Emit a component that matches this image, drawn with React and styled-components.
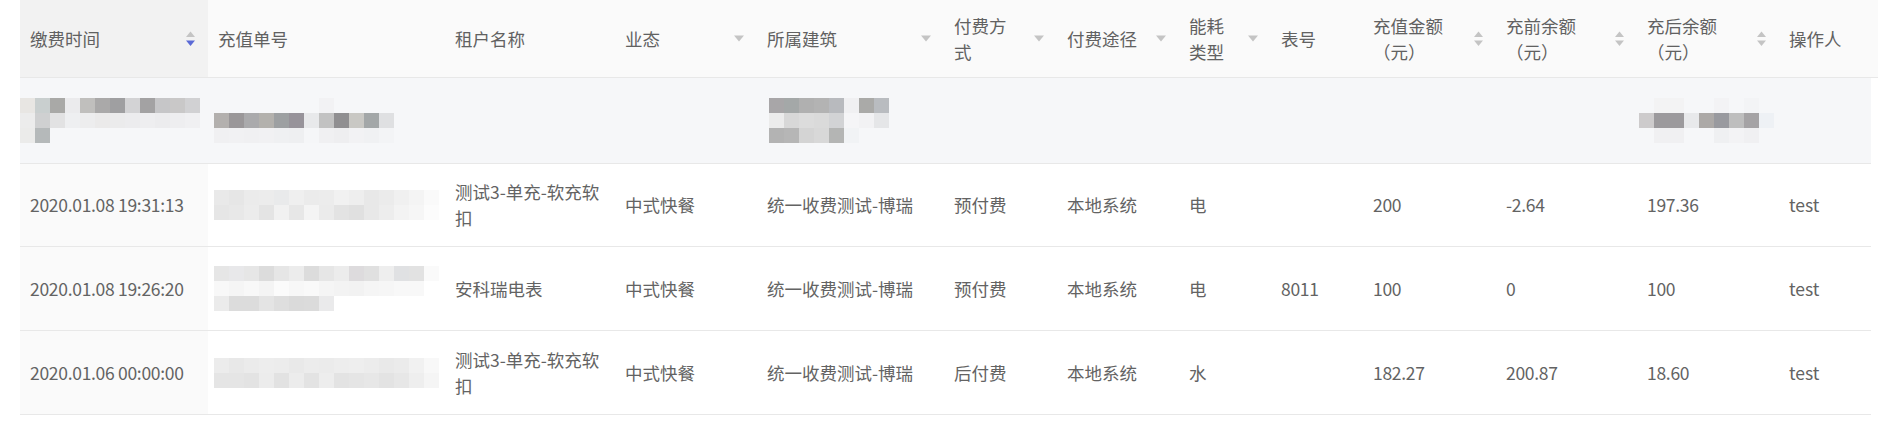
import React from 'react'
import styled, { createGlobalStyle } from 'styled-components'

const GlobalStyle = createGlobalStyle`
    body {
        margin: 0;
        background: #fff;
        font-family: "Noto Sans CJK SC", sans-serif;
    }
`;

const COLS = [188, 237, 170, 142, 187, 113, 122, 92, 92, 133, 141, 142, 92];
const template = COLS.map((w) => `${w}px`).join(' ');

const Page = styled.div`
    padding-left: 20px;
    width: 1858px;
    color: #636363;
    font-size: 17.5px;
    line-height: 26px;
`;

const HeadRow = styled.div`
    display: grid;
    grid-template-columns: ${template} 7px;
    height: 77px;
    background: #fafafa;
    border-bottom: 1px solid #e8e8e8;
    width: 1858px;
`;

const Row = styled.div`
    display: grid;
    grid-template-columns: ${template};
    height: ${(p) => p.$h}px;
    background: ${(p) => p.$bg || '#fff'};
    border-bottom: 1px solid #e8e8e8;
    width: 1851px;
`;

const HeadCell = styled.div`
    display: flex;
    align-items: center;
    padding-left: 10px;
    background: ${(p) => (p.$sorted ? '#f2f2f2' : 'transparent')};
    color: #616161;
    min-width: 0;
`;

const Title = styled.span`
    flex: 1;
    min-width: 0;
`;

const IconSlot = styled.span`
    flex: 0 0 36px;
    display: flex;
    align-items: center;
    justify-content: center;
`;

const Cell = styled.div`
    display: flex;
    align-items: center;
    padding: 0 10px;
    background: ${(p) => (p.$sorted ? '#fafafa' : 'transparent')};
    letter-spacing: ${(p) => (p.$num ? '-0.3px' : 'normal')};
    min-width: 0;
`;

const FlushCell = styled.div`
    display: flex;
    align-items: center;
    min-width: 0;
`;

const Mosaic = styled.svg`
    display: block;
    flex: none;
    margin-left: ${(p) => p.$shift || 0}px;
`;

const SortIcon = ({ active }) => (
    <svg width="9" height="16" viewBox="0 0 9 16">
        <polygon points="0,6 4.5,0.5 9,6" fill="#c4c4c4" />
        <polygon points="0,9.5 9,9.5 4.5,15" fill={active ? '#5b6ad6' : '#c4c4c4'} />
    </svg>
);

const FilterIcon = () => (
    <svg width="10" height="7" viewBox="0 0 10 7">
        <polygon points="0,0.5 10,0.5 5,6.5" fill="#c4c4c4" />
    </svg>
);

const Blocks = ({ rows, shift }) => {
    const n = Math.max(...rows.map((r) => r.length));
    return (
        <Mosaic $shift={shift} width={n * 15} height={rows.length * 15} viewBox={`0 0 ${n * 15} ${rows.length * 15}`}>
            {rows.map((r, y) =>
                r.map((c, x) =>
                    c ? <rect key={`${x}-${y}`} x={x * 15} y={y * 15} width="15" height="15" fill={c} /> : null
                )
            )}
        </Mosaic>
    );
};

const heads = [
    { t: '缴费时间', icon: 'sort', active: true, sorted: true },
    { t: '充值单号' },
    { t: '租户名称' },
    { t: '业态', icon: 'filter' },
    { t: '所属建筑', icon: 'filter' },
    { t: '付费方式', icon: 'filter' },
    { t: '付费途径', icon: 'filter' },
    { t: '能耗类型', icon: 'filter' },
    { t: '表号' },
    { t: '充值金额（元）', icon: 'sort' },
    { t: '充前余额（元）', icon: 'sort' },
    { t: '充后余额（元）', icon: 'sort' },
    { t: '操作人' },
];

const blurTime = [
    ['#e8e6e3', '#c9cfcf', '#a9a9a7', '#ebebed', '#c0bfbd', '#aaa9a9', '#9f9fa1', '#d3d3d5', '#a3a2a3', '#c6c6c8', '#c9c8c8', '#d1d1d3'],
    ['#ececec', '#cfd0d1', '#e2e2e3', '#eeeff1', '#ededee', '#ebeaea', '#ebebec', '#ececee', '#eeeef0', '#ececee', '#eeeef0', '#f0f0f2'],
    ['#ebebea', '#b5b9ba'],
];
const blurOrder = [
    [null, null, null, null, null, null, null, '#f2f2f4', null, null, null, null],
    ['#b3b0ae', '#9a9799', '#aaaaac', '#b3b1ad', '#9da0a2', '#97939a', '#e8e9eb', '#c2c2c2', '#908f91', '#c9c8c4', '#a3a7a8', '#dfe0e2'],
    ['#f0f0f2', '#f1f1f3', '#f0f0f2', '#f1f1f3', '#eff0f2', '#eeeff1', '#f5f6f8', '#f0f0f2', '#eeeef0', '#f2f2f4', '#f0f1f3', '#f3f4f6'],
];
const blurBuilding = [
    ['#a8a6a8', '#a4a8a8', '#b0b0b0', '#b3b3b3', '#b8babe', '#f0f0f2', '#aaaaa8', '#b9bcc0'],
    ['#ececec', '#d8d8d8', '#dcdcdc', '#dadada', '#d2d3d5', '#f5f5f7', '#f2f2f4', '#e5e6e8'],
    ['#b3b3b3', '#b6b6b6', '#d4d4d4', '#d8d8d8', '#b4b5b4', '#f1f3f5'],
];
const blurAfter = [
    [null, '#f3f3f4', '#f3f3f4', null, null, '#f3f3f5', null, '#f3f4f6', null],
    ['#cdcbcc', '#9c9a9d', '#9c9a9d', '#e8e9eb', '#aca9a7', '#999a9f', '#bebebe', '#a5a3a5', '#eef1f5'],
    [null, '#f0f0f2', '#f0f0f2', null, null, '#eff0f2', '#f3f3f5', '#f0f0f2', null],
];

const rows = [
    {
        time: '2020.01.08 19:31:13',
        order: [
            ['#e9e9e9', '#e6e6e6', '#ebebeb', '#ececec', '#e9eaeb', '#efefef', '#ebebeb', '#ececec', '#f1f1f1', '#eeeeee', '#e8e8e8', '#ebebeb', '#f0f0f0', '#f4f4f4', '#fafafa'],
            ['#e6e6e6', '#e8e8e8', '#ececec', '#e4e4e4', '#f1f1f1', '#e7e7e7', '#f4f4f4', '#ebebeb', '#e3e3e3', '#e0e0e0', '#e8e8e8', '#ededed', '#f3f3f3', '#f6f6f6', '#fcfcfc'],
        ],
        tenant: '测试3-单充-软充软扣',
        biz: '中式快餐',
        building: '统一收费测试-博瑞',
        payType: '预付费',
        channel: '本地系统',
        energy: '电',
        meter: '',
        amount: '200',
        before: '-2.64',
        after: '197.36',
        user: 'test',
        h: 82,
    },
    {
        time: '2020.01.08 19:26:20',
        order: [
            ['#e6e6e6', '#e8e8ea', '#e6e6e6', '#dcdcdc', '#e6e6e6', '#ececec', '#dcdcdc', '#e6e6e6', '#ececec', '#dddbdd', '#e0e0e0', '#eeeeee', '#e0e1e3', '#e2e2e2', '#fafafa'],
            ['#f8f8f8', '#f5f5f5', '#f8f8f8', '#f4f4f4', '#fbfbfb', '#f7f7f7', '#f9f9f9', '#f5f5f5', '#f3f3f3', '#f2f2f2', '#f5f5f5', '#f6f6f6', '#f8f8f8', '#f8f8f8'],
            ['#ebebeb', '#dcdcdc', '#dcdcdc', '#e4e4e4', '#dedede', '#dadada', '#dbdbdb', '#eaeaeb'],
        ],
        tenant: '安科瑞电表',
        biz: '中式快餐',
        building: '统一收费测试-博瑞',
        payType: '预付费',
        channel: '本地系统',
        energy: '电',
        meter: '8011',
        amount: '100',
        before: '0',
        after: '100',
        user: 'test',
        h: 83,
    },
    {
        time: '2020.01.06 00:00:00',
        order: [
            ['#ececec', '#e8e8e8', '#ebebeb', '#ededed', '#ececec', '#e9e9e9', '#ececec', '#ebebeb', '#ededed', '#eeeeee', '#ececec', '#e9e9e9', '#ebebeb', '#f1f1f1', '#f8f8f8'],
            ['#e5e5e5', '#e5e5e5', '#e3e3e3', '#ececec', '#e2e2e2', '#ececec', '#e3e3e3', '#ededed', '#e3e3e3', '#e5e5e5', '#e7e7e7', '#e3e3e3', '#e7e7e7', '#eeeeee', '#f5f5f5'],
        ],
        tenant: '测试3-单充-软充软扣',
        biz: '中式快餐',
        building: '统一收费测试-博瑞',
        payType: '后付费',
        channel: '本地系统',
        energy: '水',
        meter: '',
        amount: '182.27',
        before: '200.87',
        after: '18.60',
        user: 'test',
        h: 83,
    },
];

export default function App() {
    return (
        <Page>
            <GlobalStyle />
            <HeadRow>
                {heads.map((h) => (
                    <HeadCell key={h.t} $sorted={h.sorted}>
                        <Title>{h.t}</Title>
                        {h.icon && (
                            <IconSlot>{h.icon === 'sort' ? <SortIcon active={h.active} /> : <FilterIcon />}</IconSlot>
                        )}
                    </HeadCell>
                ))}
                <div />
            </HeadRow>
            <Row $h={85} $bg="#f6f7f9">
                <FlushCell><Blocks rows={blurTime} /></FlushCell>
                <Cell><Blocks rows={blurOrder} shift={-4} /></Cell>
                <Cell />
                <Cell />
                <Cell><Blocks rows={blurBuilding} shift={2} /></Cell>
                <Cell />
                <Cell />
                <Cell />
                <Cell />
                <Cell />
                <Cell />
                <Cell><Blocks rows={blurAfter} shift={-8} /></Cell>
                <Cell />
            </Row>
            {rows.map((r) => (
                <Row key={r.time} $h={r.h}>
                    <Cell $sorted $num>{r.time}</Cell>
                    <Cell><Blocks rows={r.order} shift={-4} /></Cell>
                    <Cell>{r.tenant}</Cell>
                    <Cell>{r.biz}</Cell>
                    <Cell>{r.building}</Cell>
                    <Cell>{r.payType}</Cell>
                    <Cell>{r.channel}</Cell>
                    <Cell>{r.energy}</Cell>
                    <Cell $num>{r.meter}</Cell>
                    <Cell $num>{r.amount}</Cell>
                    <Cell $num>{r.before}</Cell>
                    <Cell $num>{r.after}</Cell>
                    <Cell>{r.user}</Cell>
                </Row>
            ))}
        </Page>
    );
}
